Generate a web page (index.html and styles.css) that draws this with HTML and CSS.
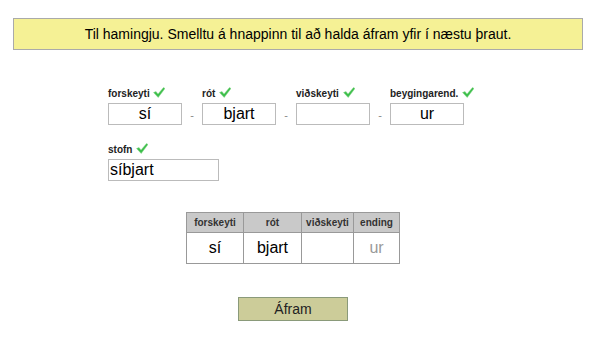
FILE: index.html
```html
<!DOCTYPE html>
<html>
<head>
    <title>Orðhlutar</title>
    <link rel="stylesheet" href="styles.css">
</head>
<body>
    <div class="page">
        <div class="message">Til hamingju. Smelltu á hnappinn til að halda áfram yfir í næstu þraut.</div>

        <div class="parts">
            <div class="field">
                <label>forskeyti <svg class="check" viewBox="0 0 12 11"><path d="M0.5 5.5 L3 4.5 L5 7 L10.5 0.5 L12 1.5 L5.2 10.5 Z"/></svg></label>
                <input class="part" type="text" value="sí">
            </div>
            <span class="dash">-</span>
            <div class="field">
                <label>rót <svg class="check" viewBox="0 0 12 11"><path d="M0.5 5.5 L3 4.5 L5 7 L10.5 0.5 L12 1.5 L5.2 10.5 Z"/></svg></label>
                <input class="part" type="text" value="bjart">
            </div>
            <span class="dash">-</span>
            <div class="field">
                <label>viðskeyti <svg class="check" viewBox="0 0 12 11"><path d="M0.5 5.5 L3 4.5 L5 7 L10.5 0.5 L12 1.5 L5.2 10.5 Z"/></svg></label>
                <input class="part" type="text" value="">
            </div>
            <span class="dash">-</span>
            <div class="field">
                <label>beygingarend. <svg class="check" viewBox="0 0 12 11"><path d="M0.5 5.5 L3 4.5 L5 7 L10.5 0.5 L12 1.5 L5.2 10.5 Z"/></svg></label>
                <input class="part" type="text" value="ur">
            </div>
        </div>

        <div class="stem">
            <div class="field">
                <label>stofn <svg class="check" viewBox="0 0 12 11"><path d="M0.5 5.5 L3 4.5 L5 7 L10.5 0.5 L12 1.5 L5.2 10.5 Z"/></svg></label>
                <input class="stem-input" type="text" value="síbjart">
            </div>
        </div>

        <table class="summary">
            <tr>
                <th class="c1">forskeyti</th>
                <th class="c2">rót</th>
                <th class="c3">viðskeyti</th>
                <th class="c4">ending</th>
            </tr>
            <tr>
                <td>sí</td>
                <td>bjart</td>
                <td></td>
                <td class="ending">ur</td>
            </tr>
        </table>

        <div class="button-row">
            <button class="button">Áfram</button>
        </div>
    </div>
</body>
</html>
```

FILE: styles.css
```css
body {
    margin: 0;
    font-family: "Liberation Sans", Arial, sans-serif;
    background-color: #fff;
    color: #000;
}

.page {
    width: 560px;
    padding: 18px 0 0 13px;
}

.message {
    width: 570px;
    box-sizing: border-box;
    height: 32px;
    line-height: 30px;
    background-color: #f5f195;
    border: 1px solid #aaa;
    text-align: center;
    font-size: 14px;
}

.parts {
    display: flex;
    margin: 37px 0 0 95px;
}

.field {
    display: flex;
    flex-direction: column;
}

.field label {
    font-size: 10px;
    font-weight: bold;
    color: #222;
    height: 14px;
    line-height: 14px;
    margin-bottom: 2px;
}

.check {
    width: 12px;
    height: 11px;
    margin-left: 1px;
    vertical-align: -1px;
    fill: #3dbf4c;
    stroke: #8fd98f;
    stroke-width: 0.5;
}

.part, .stem-input {
    box-sizing: border-box;
    height: 22px;
    border: 1px solid #bbb;
    font-family: "Liberation Sans", Arial, sans-serif;
    font-size: 16px;
    color: #000;
    padding: 0;
    margin: 0;
}

.part {
    width: 74px;
    text-align: center;
}

.stem-input {
    width: 111px;
    padding-left: 1px;
}

.dash {
    width: 20px;
    align-self: flex-end;
    text-align: center;
    font-size: 11px;
    color: #888;
    line-height: 20px;
}

.stem {
    margin: 18px 0 0 95px;
}

.summary {
    border-collapse: collapse;
    margin: 31px 0 0 173px;
}

.summary th, .summary td {
    border: 1px solid #999;
    padding: 0;
    text-align: center;
}

.summary th {
    background-color: #c9c9c9;
    font-size: 10px;
    font-weight: bold;
    color: #333;
    height: 19px;
}

.summary td {
    font-size: 16px;
    height: 30px;
}

.c1 { width: 56px; }
.c2 { width: 57px; }
.c3 { width: 51px; }
.c4 { width: 45px; }

.summary td.ending {
    color: #999;
}

.button-row {
    margin: 33px 0 0 225px;
}

.button {
    width: 110px;
    height: 24px;
    background-color: #cccc99;
    border: 1px solid #8a9a7a;
    font-family: "Liberation Sans", Arial, sans-serif;
    font-size: 14px;
    color: #222;
    padding: 0;
}
```
